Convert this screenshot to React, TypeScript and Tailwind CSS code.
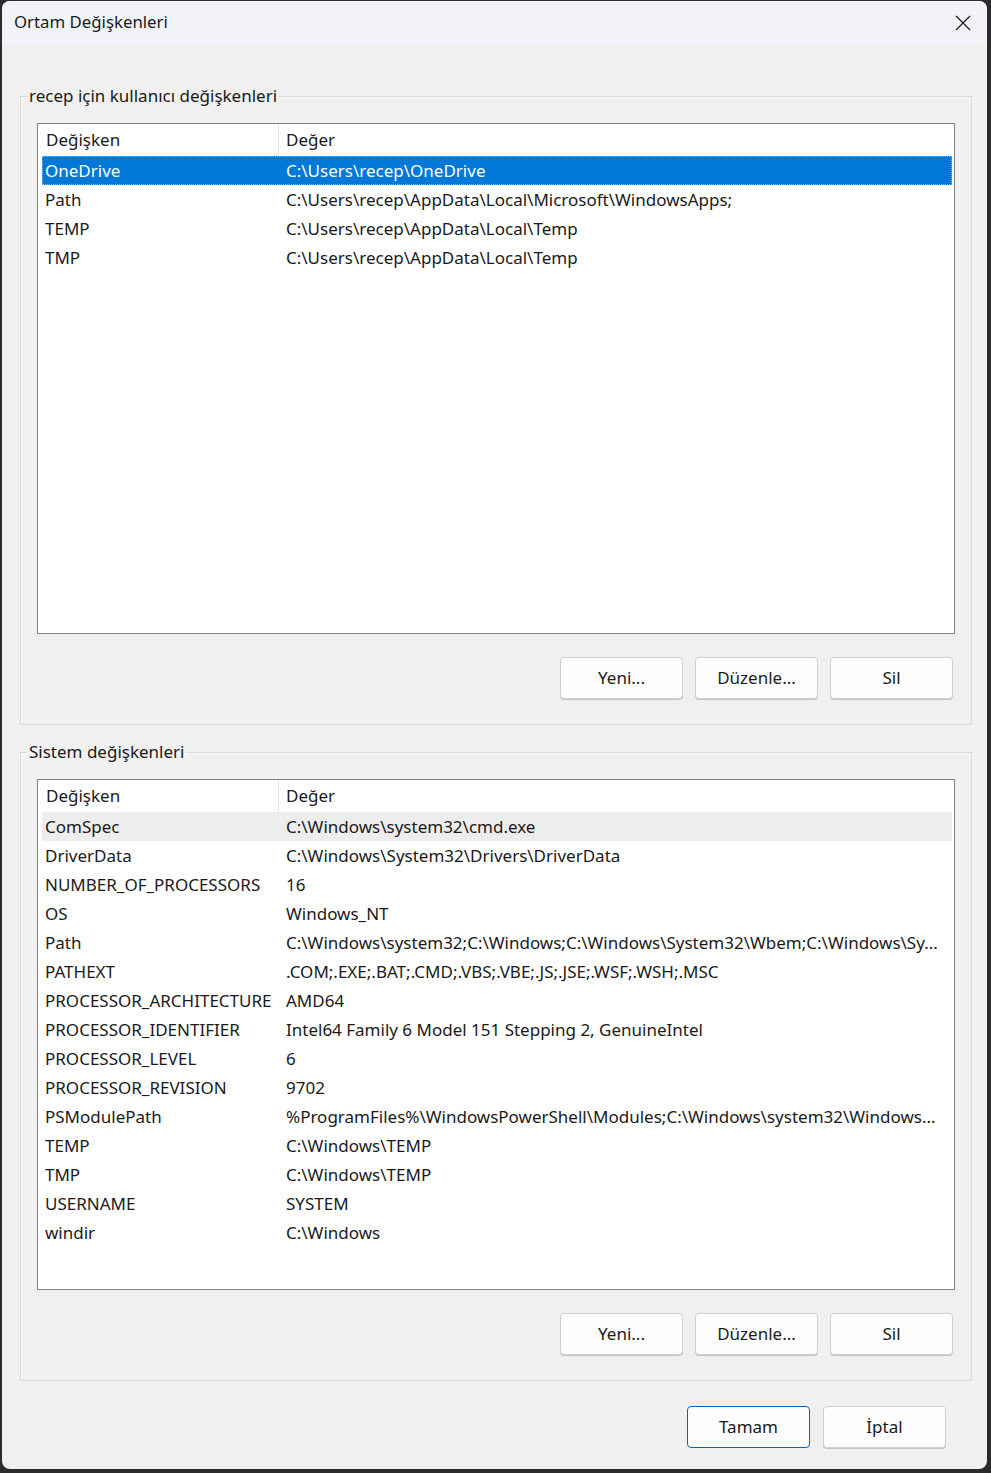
import React from "react";

type Row = { name: string; value: string };

const userVars: Row[] = [
  { name: "OneDrive", value: "C:\\Users\\recep\\OneDrive" },
  { name: "Path", value: "C:\\Users\\recep\\AppData\\Local\\Microsoft\\WindowsApps;" },
  { name: "TEMP", value: "C:\\Users\\recep\\AppData\\Local\\Temp" },
  { name: "TMP", value: "C:\\Users\\recep\\AppData\\Local\\Temp" },
];

const systemVars: Row[] = [
  { name: "ComSpec", value: "C:\\Windows\\system32\\cmd.exe" },
  { name: "DriverData", value: "C:\\Windows\\System32\\Drivers\\DriverData" },
  { name: "NUMBER_OF_PROCESSORS", value: "16" },
  { name: "OS", value: "Windows_NT" },
  { name: "Path", value: "C:\\Windows\\system32;C:\\Windows;C:\\Windows\\System32\\Wbem;C:\\Windows\\Sy..." },
  { name: "PATHEXT", value: ".COM;.EXE;.BAT;.CMD;.VBS;.VBE;.JS;.JSE;.WSF;.WSH;.MSC" },
  { name: "PROCESSOR_ARCHITECTURE", value: "AMD64" },
  { name: "PROCESSOR_IDENTIFIER", value: "Intel64 Family 6 Model 151 Stepping 2, GenuineIntel" },
  { name: "PROCESSOR_LEVEL", value: "6" },
  { name: "PROCESSOR_REVISION", value: "9702" },
  { name: "PSModulePath", value: "%ProgramFiles%\\WindowsPowerShell\\Modules;C:\\Windows\\system32\\Windows..." },
  { name: "TEMP", value: "C:\\Windows\\TEMP" },
  { name: "TMP", value: "C:\\Windows\\TEMP" },
  { name: "USERNAME", value: "SYSTEM" },
  { name: "windir", value: "C:\\Windows" },
];

export default function App() {
  return (
    <div
      className="w-[991px] h-[1473px] bg-[#2b2b2b] pt-[1px] pl-[2px] pr-[4px] pb-[4px] text-[#1a1a1a]"
      style={{ fontFamily: '"Noto Sans", "Open Sans", sans-serif' }}
    >
      <div className="w-full h-full rounded-lg overflow-hidden bg-[#f0f0f0] flex flex-col">
        {/* title bar */}
        <div className="h-[43px] shrink-0 bg-[#f2f3f8] flex items-center justify-between pl-[12px] pr-[16px]">
          <span className="text-[16.8px] leading-none">Ortam Değişkenleri</span>
          <svg width="16" height="16" viewBox="0 0 16 16">
            <path d="M1 1 L15 15 M15 1 L1 15" stroke="#1a1a1a" strokeWidth="1.2" fill="none" />
          </svg>
        </div>

        <div className="flex-1 pl-[18px] pr-[15px] pt-[41px]">
          <VarGroup title="recep için kullanıcı değişkenleri" rows={userVars} selected={0} />
          <div className="h-[16px]" />
          <VarGroup title="Sistem değişkenleri" rows={systemVars} hover={0} />

          <div className="flex justify-end gap-[13px] pr-[26px] mt-[25px]">
            <DlgButton label="Tamam" primary />
            <DlgButton label="İptal" />
          </div>
        </div>
      </div>
    </div>
  );
}

function VarGroup({
  title,
  rows,
  selected,
  hover,
}: {
  title: string;
  rows: Row[];
  selected?: number;
  hover?: number;
}) {
  return (
    <fieldset className="border border-[#dadada] shadow-[inset_1px_1px_0_#fafafa] px-[16px] pb-[25px] pt-[16px]">
      <legend className="-ml-[10px] px-[2px] text-[17px] leading-[22px]">{title}</legend>
      <div className="h-[511px] bg-white border border-[#828282] text-[17px]">
        <div className="h-[32px] flex items-center">
          <div className="w-[241px] h-full flex items-center pl-[8px] border-r border-[#e5e5e5]">Değişken</div>
          <div className="flex-1 pl-[7px]">Değer</div>
        </div>
        {rows.map((r, i) => {
          const sel = i === selected;
          const hov = i === hover;
          return (
            <div
              key={r.name + i}
              className={
                "h-[29px] ml-[4px] mr-[2px] flex items-center whitespace-nowrap overflow-hidden " +
                (sel
                  ? "bg-[#0078d7] text-white outline-1 outline-dotted outline-[#8ab8e6] -outline-offset-1"
                  : hov
                  ? "bg-[#ededed]"
                  : "")
              }
            >
              <div className="w-[244px] shrink-0 pl-[3px]">{r.name}</div>
              <div className="flex-1 overflow-hidden">{r.value}</div>
            </div>
          );
        })}
      </div>
      <div className="flex justify-end gap-[12px] pr-[2px] mt-[23px]">
        <DlgButton label="Yeni..." />
        <DlgButton label="Düzenle..." />
        <DlgButton label="Sil" />
      </div>
    </fieldset>
  );
}

function DlgButton({ label, primary }: { label: string; primary?: boolean }) {
  return (
    <button
      className={
        "w-[123px] h-[42px] rounded-[4px] bg-[#fdfdfd] text-[17px] text-[#1a1a1a] border " +
        (primary ? "border-[#0067c0]" : "border-[#d0d0d0] shadow-[0_1px_0_#c4c4c4]")
      }
    >
      {label}
    </button>
  );
}
